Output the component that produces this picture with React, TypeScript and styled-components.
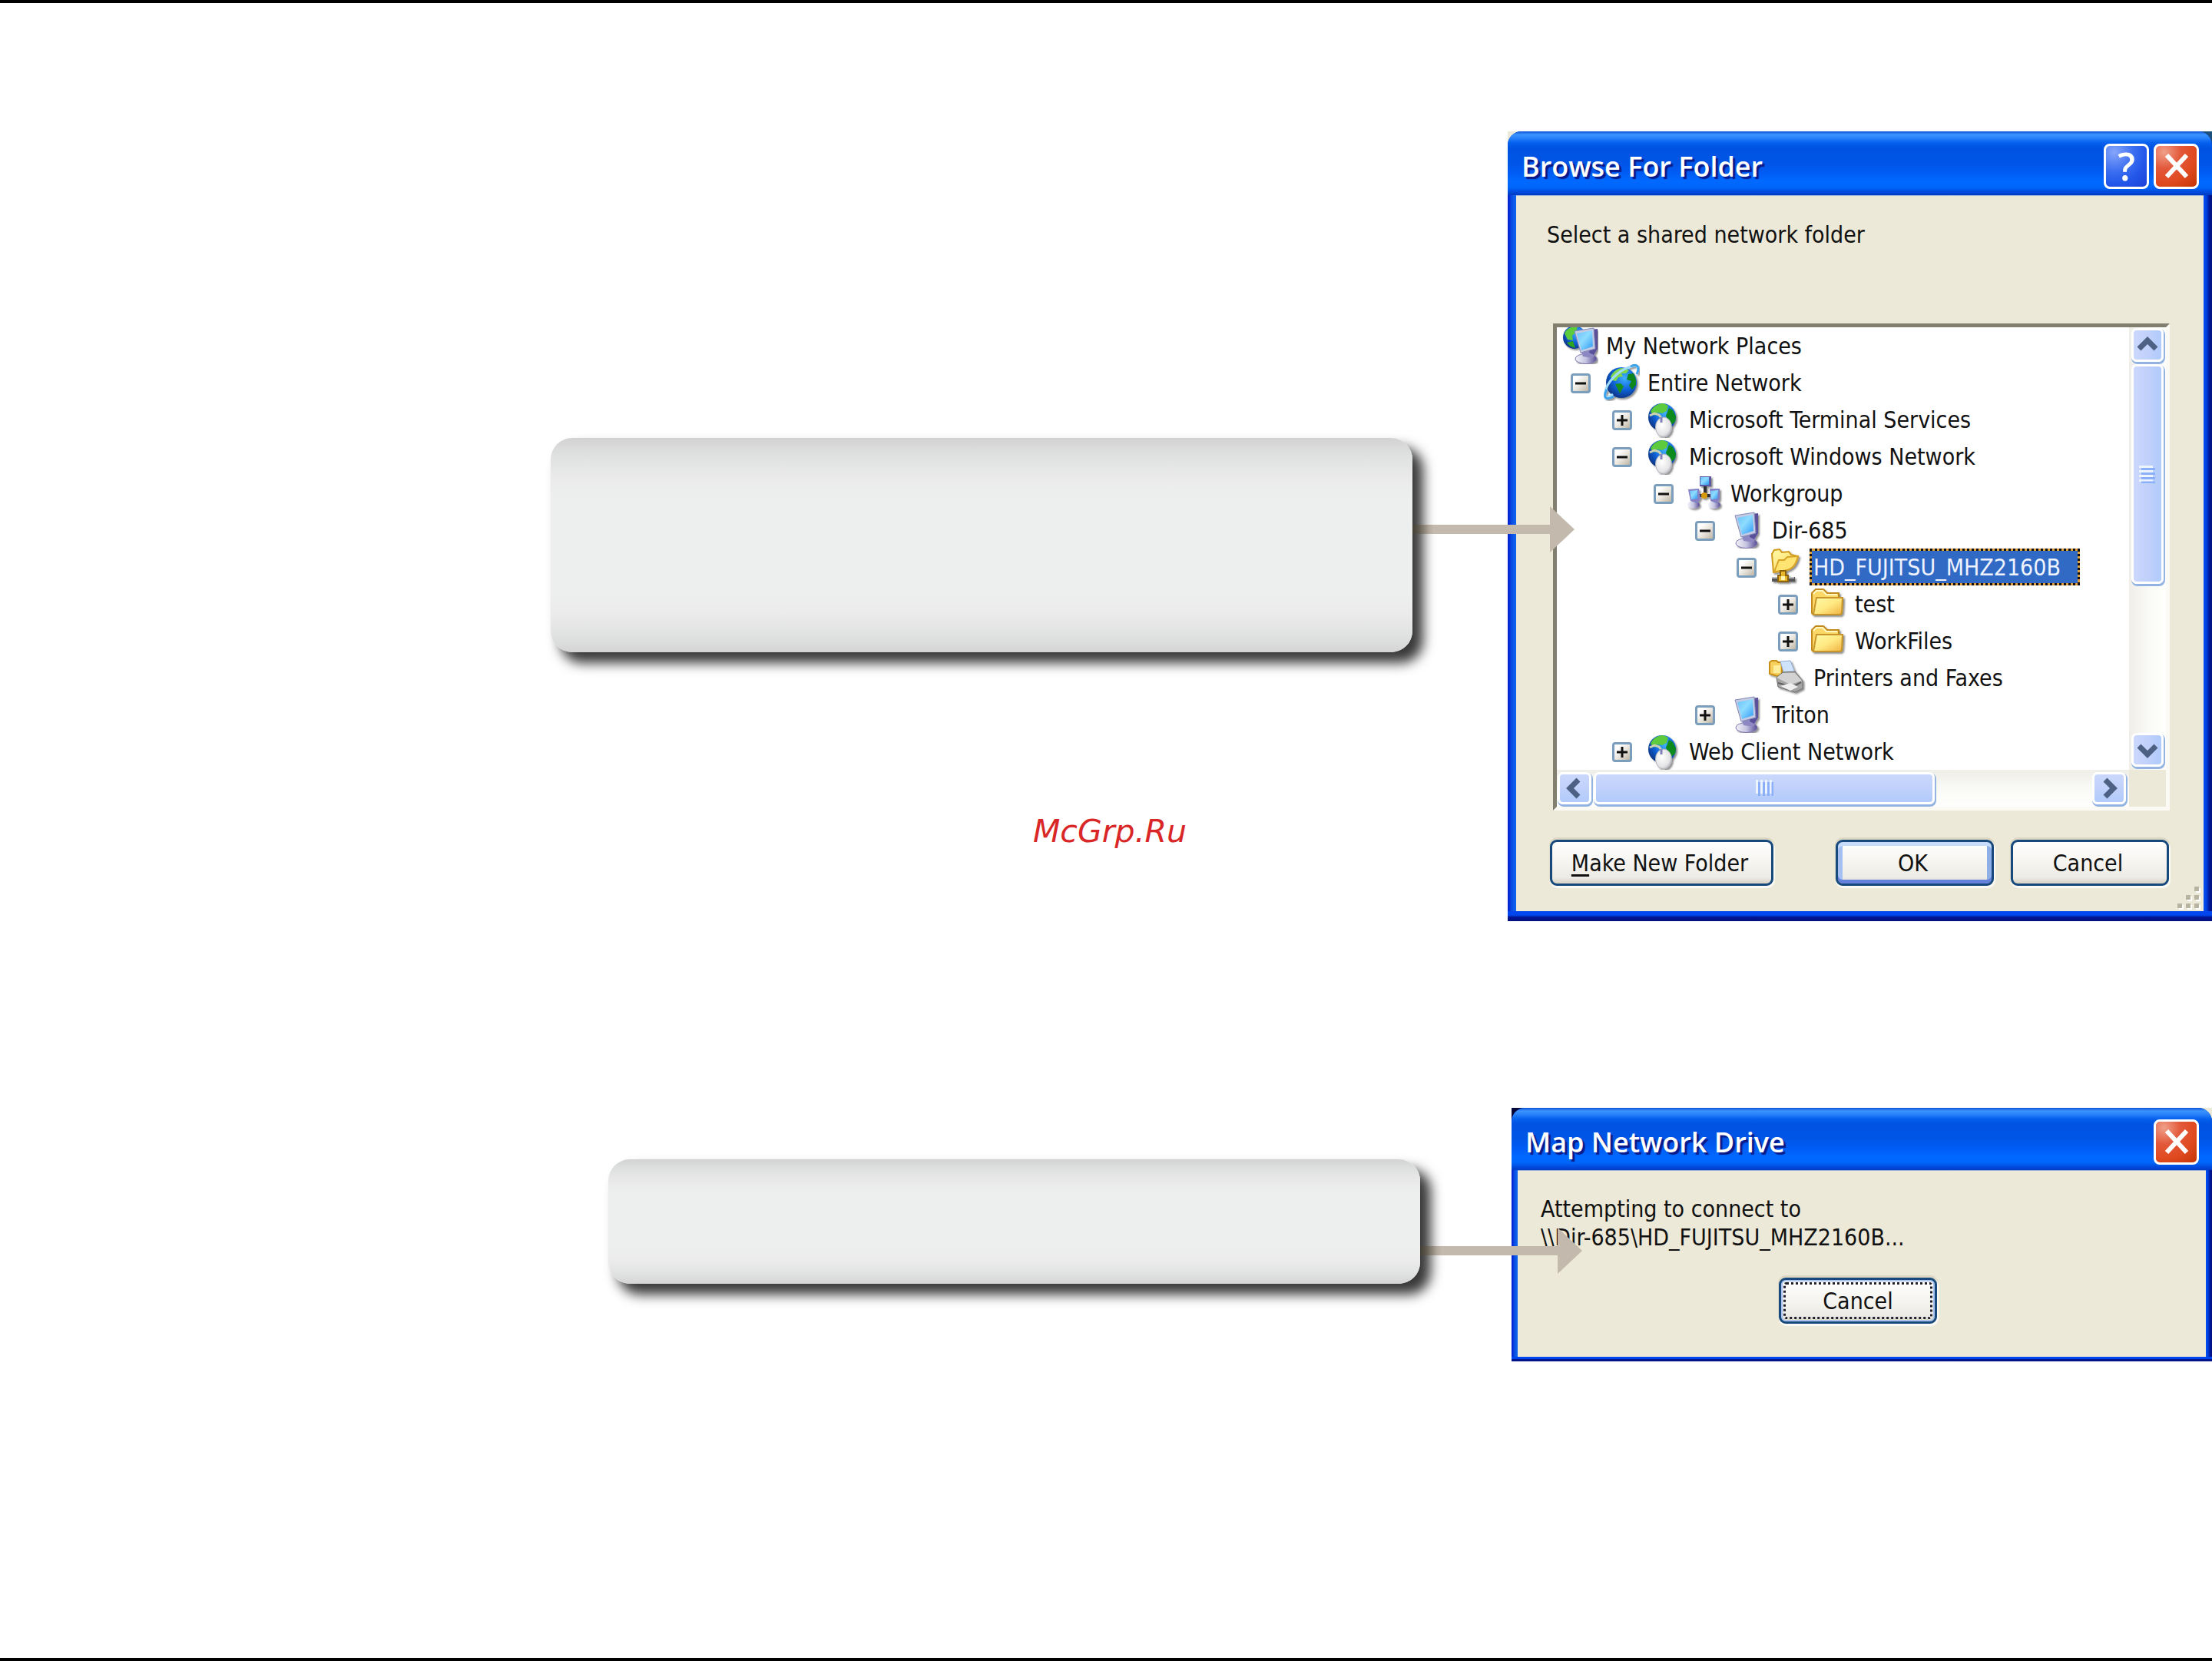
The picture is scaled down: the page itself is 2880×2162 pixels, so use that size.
import React from "react";
import styled, { createGlobalStyle } from "styled-components";

const ui = `"DejaVu Sans Condensed", "DejaVu Sans", "Open Sans", sans-serif`;

const GlobalStyle = createGlobalStyle`
  *, *::before, *::after { box-sizing: border-box; }
  body { margin: 0; background: #fff; color: #111; font: 30px/36px ${ui}; }
  button { font: inherit; color: inherit; margin: 0; padding: 0; cursor: pointer; }
  ul { list-style: none; margin: 0; padding: 0; }
  p, h2 { margin: 0; }
`;

const Page = styled.main`
  position: relative;
  display: flex;
  flex-direction: column;
  gap: 243px;
  min-height: 100vh;
  padding: 167px 0 240px;
  border: solid #000;
  border-width: 4px 0;
  overflow: hidden;
`;

const Step = styled.section<{ $columns: string }>`
  display: grid;
  grid-template-columns: ${(p) => p.$columns};
  align-items: start;
`;

const Callout = styled.div<{ $top: number; $height: number }>`
  grid-column: 2;
  margin-top: ${(p) => p.$top}px;
  height: ${(p) => p.$height}px;
  border-radius: 28px;
  background: linear-gradient(#d2d2d2, #dfe1e0 8%, #ebebeb 20%, #edefee 28%, #edefee 72%, #ebebeb 82%, #dfe1e0 93%, #d4d4d4);
  box-shadow: 13px 13px 16px 1px rgba(0, 0, 0, 0.78);
`;

const Connector = styled.div<{ $top: number; $overlap: number }>`
  display: flex;
  align-items: center;
  z-index: 1;
  margin: ${(p) => p.$top}px -${(p) => p.$overlap}px 0 0;

  &::before {
    content: "";
    flex: 1;
    height: 12px;
    background: linear-gradient(to right, #423e35, #5f594e 8px, #b3aa9d 22px, #c3baad 28px);
  }
  &::after {
    content: "";
    border-left: 32px solid #c3baad;
    border-top: 30px solid transparent;
    border-bottom: 30px solid transparent;
  }
`;

const Watermark = styled.a`
  position: absolute;
  left: 50%;
  top: 1054px;
  margin-left: 5px;
  transform: translateX(-50%);
  color: #d92626;
  font: italic 41px/48px "DejaVu Sans", sans-serif;
  text-decoration: none;
`;

const Backdrop = styled.div<{ $left: string; $right: string }>`
  background: linear-gradient(to right, ${(p) => p.$left} 50%, ${(p) => p.$right} 50%) top / 100% 40px no-repeat;
`;

const Window = styled.section<{ $side: number; $base: number }>`
  padding: 0 ${(p) => p.$side}px ${(p) => p.$base}px;
  border-radius: 18px 18px 0 0;
  overflow: hidden;
  background:
    linear-gradient(#0046ee 40%, #001590 60%, #000f80) bottom / 100% ${(p) => p.$base}px no-repeat,
    linear-gradient(to right, #0019cf, #0a50e4 50%, #0f66ee) left / ${(p) => p.$side}px 100% no-repeat,
    linear-gradient(to right, #0050f4, #0040e0 35%, #001aa0 65%, #00107c) right / ${(p) => p.$side}px 100% no-repeat,
    #0050e6;
`;

const TitleBar = styled.header<{ $side: number; $height: number }>`
  display: flex;
  align-items: center;
  gap: 6px;
  height: ${(p) => p.$height}px;
  margin: 0 -${(p) => p.$side}px;
  padding: 7px 17px 0 18px;
  background: linear-gradient(#0c52d4, #3c94ff 5%, #2a84fb 10%, #0560ee 18%, #0053e2 26%, #0055e6 50%, #005cf5 65%, #0069ff 78%, #0066fb 88%, #0047d8 96%, #003bc0);
`;

const Title = styled.h2`
  flex: 1;
  margin-top: 2px;
  color: #fff;
  font: 600 36px/48px "Open Sans", "Noto Sans", sans-serif;
  text-shadow: 3px 3px 1px #0a1a88;
  white-space: nowrap;
`;

const CaptionButton = styled.button<{ $danger?: boolean }>`
  display: grid;
  place-items: center;
  width: 59px;
  height: 59px;
  border: 3px solid #fff;
  border-radius: 8px;
  color: #fff;
  font: 600 50px/50px "Open Sans", sans-serif;
  background: ${(p) =>
    p.$danger
      ? "radial-gradient(circle at 20% 15%, #f0a08a, #e2583a 35%, #e04a20 65%, #c23404)"
      : "radial-gradient(circle at 20% 15%, #86a6fb, #3d6ff0 40%, #2458ea 65%, #1c40d8)"};
`;

const Body = styled.div`
  position: relative;
  padding: 33px 44px 33px 44px;
  background: #ece9d8;
  border-top: 1px solid #9cb4dc;
`;

const Prompt = styled.p`
  margin: 0 0 97px -4px;
`;

const TreeFrame = styled.div`
  display: grid;
  grid-template-columns: 1fr 48px;
  grid-template-rows: auto 48px;
  margin: 0 0 38px 4px;
  border: 5px solid;
  border-color: #827e70 #fbfaf4 #fbfaf4 #827e70;
  background: #ece9d8;
`;

const Tree = styled.ul`
  background: #fff;
`;

const TreeItem = styled.li<{ $level: number }>`
  display: flex;
  align-items: center;
  height: 48px;
  padding-left: ${(p) => (p.$level ? (p.$level - 1) * 54 : 6)}px;
  white-space: nowrap;

  & > svg { flex: none; width: 48px; height: 48px; margin-right: 5px; }
`;

const ToggleSlot = styled.span`
  flex: none;
  width: 60px;
  padding: 2px 0 0 18px;
`;

const Toggle = styled.button`
  display: grid;
  place-items: center;
  width: 26px;
  height: 26px;
  border: 3px solid #7b9ebd;
  border-radius: 4px;
  background: linear-gradient(135deg, #fff 20%, #e9e5dd 55%, #bdb5a5);
`;

const NodeLabel = styled.span<{ $selected?: boolean }>`
  padding: 4px 22px 2px 2px;
  border: 3px dotted transparent;
  ${(p) =>
    p.$selected &&
    `color: #eef3ff; border-color: #111; background: linear-gradient(#316ac5, #316ac5) padding-box, #e0a040 border-box;`}
`;

const ScrollTrack = styled.div<{ $vertical?: boolean }>`
  display: flex;
  flex-direction: ${(p) => (p.$vertical ? "column" : "row")};
  gap: 3px;
  padding: ${(p) => (p.$vertical ? "1px 3px 4px 3px" : "3px 4px 3px 1px")};
  background: linear-gradient(${(p) => (p.$vertical ? "to right" : "to bottom")}, #efeee8, #fbfbf8 60%, #fefefc);
`;

const ScrollPart = styled.button<{ $vertical?: boolean; $length?: string; $push?: boolean }>`
  display: grid;
  place-items: center;
  flex: 0 0 ${(p) => p.$length ?? "44px"};
  ${(p) => (p.$vertical ? "width: 42px;" : "height: 42px;")}
  ${(p) => p.$push && (p.$vertical ? "margin-top: auto;" : "margin-left: auto;")}
  border: 3px solid #fff;
  border-radius: 7px;
  box-shadow: 1px 2px 0 1px #93b4e2;
  background: linear-gradient(${(p) => (p.$vertical ? "to right" : "to bottom")}, #cbd8fc, #bfd0fb 55%, #b0cbfb);
`;

const Actions = styled.footer`
  display: flex;
  align-items: center;
  gap: 22px;
  margin-right: 1px;
`;

const PushButton = styled.button<{ $width: number; $kind?: "default" | "focused"; $push?: boolean }>`
  display: flex;
  align-items: center;
  justify-content: center;
  width: ${(p) => p.$width}px;
  height: 60px;
  ${(p) => p.$push && "margin-left: auto;"}
  padding: 2px 5px 0 0;
  border: 3px solid #17497c;
  border-radius: 9px;
  background: linear-gradient(#fff, #f5f4f0 50%, #ecebe5 86%, #d8d1c4);
  box-shadow: 1px 2px 1px 1px #fbfaf5, 0 -2px 1px 1px #dbd7c4
    ${(p) => p.$kind === "default" && ", inset 0 5px 0 #c6dcfa, inset 0 -5px 0 #6482dc, inset 6px 0 0 #a4c0f2, inset -6px 0 0 #8eaee8"}
    ${(p) => p.$kind === "focused" && ", inset 0 0 0 2px #a9c3ec"};

  u { text-decoration-thickness: 3px; text-underline-offset: 4px; }
`;

const FocusRing = styled.span`
  flex: 1;
  align-self: stretch;
  margin: 1px -2px 3px 3px;
  border: 3px dotted #20202c;
  border-radius: 4px;
  line-height: 44px;
`;

const ResizeGrip = styled.svg`
  position: absolute;
  right: 4px;
  bottom: 2px;
`;

const Message = styled.div`
  display: flex;
  flex-direction: column;
  align-items: flex-start;
  padding: 31px 40px 43px 30px;
  border-top: 1px solid #9cb4dc;
  background: #ece9d8;
  line-height: 37px;

  ${PushButton} { align-self: center; margin-top: 34px; }
`;

const CloseGlyph = () => (
  <svg width="34" height="34" viewBox="0 0 34 34" aria-hidden="true">
    <path d="M4 3 30 31M30 3 4 31" stroke="#fff" strokeWidth="6" />
  </svg>
);

const Chevron = ({ turn }: { turn: number }) => (
  <svg width="28" height="28" viewBox="0 0 28 28" aria-hidden="true">
    <path d="M3 19 14 8 25 19" fill="none" stroke="#4d6185" strokeWidth="7" transform={`rotate(${turn} 14 14)`} />
  </svg>
);

const Grip = ({ vertical }: { vertical?: boolean }) => (
  <svg width="24" height="24" viewBox="0 0 24 24" aria-hidden="true">
    <g transform={vertical ? undefined : "matrix(0 1 1 0 0 0)"} strokeWidth="3">
      <path d="M1 2.5H19M1 8.500H19M1 14.500H19M1 20.500H19" stroke="#eef4fe" />
      <path d="M4 5.500H22M4 11.500H22M4 17.500H22M4 23H22" stroke="#8cb0f8" />
    </g>
  </svg>
);

const HiddenSvg = styled.svg`
  position: absolute;
`;

const Defs = () => (
  <HiddenSvg width="0" height="0" aria-hidden="true">
    <defs>
      <radialGradient id="sea" cx="0.6" cy="0.35" r="0.7">
        <stop offset="0" stopColor="#3fb2ff" />
        <stop offset="0.55" stopColor="#0f62d8" />
        <stop offset="1" stopColor="#08307e" />
      </radialGradient>
      <linearGradient id="screen" x1="0" y1="0" x2="1" y2="1">
        <stop offset="0" stopColor="#6cc0fa" />
        <stop offset="0.45" stopColor="#8edcff" />
        <stop offset="1" stopColor="#2c98f4" />
      </linearGradient>
      <linearGradient id="case" x1="0" y1="0" x2="1" y2="0">
        <stop offset="0" stopColor="#f4f4fb" />
        <stop offset="0.5" stopColor="#c4c3e0" />
        <stop offset="1" stopColor="#544a94" />
      </linearGradient>
      <linearGradient id="gold" x1="0" y1="0" x2="1" y2="1">
        <stop offset="0" stopColor="#fffaa8" />
        <stop offset="0.5" stopColor="#ffe983" />
        <stop offset="1" stopColor="#f0b040" />
      </linearGradient>
      <radialGradient id="mouse" cx="0.4" cy="0.4" r="0.7">
        <stop offset="0" stopColor="#fff" />
        <stop offset="0.7" stopColor="#e4e4e6" />
        <stop offset="1" stopColor="#a4a4a8" />
      </radialGradient>
      <filter id="soft" x="-20%" y="-20%" width="150%" height="150%">
        <feDropShadow dx="2" dy="2" stdDeviation="1.200" floodOpacity="0.45" />
      </filter>
    </defs>
  </HiddenSvg>
);

const Monitor = () => (
  <>
    <ellipse cx="25" cy="41" rx="14" ry="6.500" fill="url(#case)" stroke="#7c76ac" />
    <path d="M19 31 30 28 37 33 34 40 21 38z" fill="#8e88c2" />
    <path d="M33 3 40 2 40 28 35 36 29 33z" fill="#5a509a" />
    <path d="M10 5 35 1 37 28 18 33z" fill="#c6cbe4" stroke="#8389b8" />
    <path d="M13 8 33 4 34 25 19 30z" fill="url(#screen)" />
  </>
);

const Land = () => (
  <>
    <path d="M6 14C9 7 16 3 23 3l6 2-3 4-6 1 1 4-5 2-3 4-5-1z" fill="#4cc436" />
    <path d="M29 8 35 9 40 16 42 25 37 32 33 29 34 23 29 21 27 15z" fill="#118a1c" />
    <path d="M12 22 20 23 24 29 20 35 19 40 15 34z" fill="#2fa51e" />
  </>
);

const icons: Record<string, React.ReactNode> = {
  places: (
    <>
      <circle cx="17" cy="13" r="15" fill="url(#sea)" />
      <path d="M4 8C7 1 13-1 21-1L19 6 14 11 15 17 8 16z" fill="#5ccc3c" />
      <path d="M7 20 15 18 18 27 12 25z" fill="#2fa51e" />
      <g transform="translate(7 0)"><Monitor /></g>
    </>
  ),
  globe: (
    <>
      <circle cx="24" cy="24" r="20" fill="url(#sea)" />
      <path d="M10 16C14 9 19 5 26 5L34 8 30 12 24 12 26 16 20 17 17 22 12 21z" fill="#7fd84c" />
      <path d="M33 13 40 12 43 20 43 27 38 33 34 28 37 22 31 20z" fill="#0f861a" />
      <path d="M16 26 23 25 27 29 22 38 19 32z" fill="#188f1c" />
      <path d="M34 4C42 0 47 2 45 10M13 39C5 46 1 45 3 36 5 24 19 9 34 4" fill="none" stroke="#9fdcfc" strokeWidth="3" />
      <path d="M36 3C44-1 49 3 44 13M5 33C0 43 3 48 14 42" fill="none" stroke="#3ea2ea" strokeWidth="3" />
    </>
  ),
  provider: (
    <g transform="translate(1 1)">
      <circle cx="22" cy="20" r="18" fill="url(#sea)" />
      <path d="M7 13C10 6 16 2 24 2L30 5 28 12 22 15 16 14 12 18z" fill="#5ccb3c" />
      <path d="M31 8 36 11 40 19 39 26 34 30 29 23 27 18z" fill="#118a1c" />
      <path d="M6 18 12 15 18 17 23 24" fill="none" stroke="#c9d0b4" strokeWidth="3" />
      <ellipse cx="24" cy="33" rx="10.500" ry="13" fill="url(#mouse)" stroke="#b0b4bc" />
      <path d="M21 20V27" stroke="#8080b8" strokeWidth="3" />
    </g>
  ),
  workgroup: (
    <>
      <path d="M25 14V27M17 27H35" stroke="#2e2e34" strokeWidth="4" />
      <rect x="18" y="2" width="15" height="13" fill="#5c58a4" />
      <rect x="19" y="3" width="11" height="10" fill="url(#screen)" />
      <ellipse cx="10" cy="39" rx="8" ry="5" fill="url(#case)" />
      <ellipse cx="37" cy="39" rx="8" ry="5" fill="url(#case)" />
      <path d="M3 19 17 18 19 31 15 37 6 34z" fill="#8480c4" />
      <path d="M31 18 44 18 44 32 40 37 32 34z" fill="#8480c4" />
      <path d="M5 21 15 20 15 31 7 32z" fill="url(#screen)" />
      <path d="M32 21 42 20 41 31 33 32z" fill="url(#screen)" />
      <circle cx="24" cy="27" r="4" fill="#d89a10" />
    </>
  ),
  computer: <Monitor />,
  share: (
    <>
      <path d="M4 40H34" stroke="#555" strokeWidth="6" />
      <path d="M4 38H13M25 38H33" stroke="#b9bcc0" strokeWidth="2" />
      <path d="M4 7 7 2 14 1 17 5 26 4 29 8 38 10C36 22 30 28 18 29L6 31z" fill="url(#gold)" stroke="#cf9a1e" strokeWidth="2" />
      <path d="M7 30 13 15 20 15 24 11 38 10C35 22 30 28 18 29z" fill="#ffe472" stroke="#d8a428" strokeWidth="2" />
      <path d="M15 29H22V35H25V43H12V35H15z" fill="#e8b62c" stroke="#8d6408" strokeWidth="2" />
      <rect x="16" y="36" width="5" height="5" fill="#fff6b8" />
    </>
  ),
  folder: (
    <>
      <path d="M2 36V10L7 5H17L22 10H37V17H42L41 36 39 38H4z" fill="#fbd768" stroke="#c28a1a" strokeWidth="2" />
      <path d="M4 11 8 7H16L21 12H35" fill="none" stroke="#fff8c0" strokeWidth="2" />
      <path d="M8 16H42L41 36 39 38H4z" fill="url(#gold)" stroke="#c8962a" strokeWidth="2" />
    </>
  ),
  printer: (
    <>
      <path d="M1 4 4 2H10L12 4H17V20L11 22 1 19z" fill="#f7cf5c" stroke="#c88f18" strokeWidth="2" />
      <path d="M6 8H15V18H6z" fill="#ffed9c" />
      <path d="M15 3 28 2 34 17 20 20z" fill="#cfe4fb" stroke="#92acd0" />
      <path d="M10 24 18 17 34 16 44 28 44 38 34 43 12 36z" fill="#a4a4a4" stroke="#6c6c6c" />
      <path d="M10 24 18 18 34 18 43 28 28 33z" fill="#d2d2d2" />
      <path d="M12 31 31 36 42 30" fill="none" stroke="#606060" strokeWidth="2" />
      <path d="M15 35 28 31 38 36 28 41z" fill="#efefef" />
    </>
  ),
};

const NodeIcon = ({ name }: { name: string }) => (
  <svg viewBox="0 0 48 48" aria-hidden="true"><g filter="url(#soft)">{icons[name]}</g></svg>
);

type Node = { label: string; level: number; icon: string; open?: boolean; selected?: boolean };

const nodes: Node[] = [
  { label: "My Network Places", level: 0, icon: "places" },
  { label: "Entire Network", level: 1, icon: "globe", open: true },
  { label: "Microsoft Terminal Services", level: 2, icon: "provider", open: false },
  { label: "Microsoft Windows Network", level: 2, icon: "provider", open: true },
  { label: "Workgroup", level: 3, icon: "workgroup", open: true },
  { label: "Dir-685", level: 4, icon: "computer", open: true },
  { label: "HD_FUJITSU_MHZ2160B", level: 5, icon: "share", open: true, selected: true },
  { label: "test", level: 6, icon: "folder", open: false },
  { label: "WorkFiles", level: 6, icon: "folder", open: false },
  { label: "Printers and Faxes", level: 5, icon: "printer" },
  { label: "Triton", level: 4, icon: "computer", open: false },
  { label: "Web Client Network", level: 2, icon: "provider", open: false },
];

const FolderTree = () => (
  <Tree role="tree" aria-label="Shared network folders">
    {nodes.map((n) => (
      <TreeItem key={n.label} role="treeitem" $level={n.level} aria-level={n.level + 1} aria-expanded={n.open} aria-selected={!!n.selected}>
        {n.level > 0 && (
          <ToggleSlot>
            {n.open !== undefined && (
              <Toggle type="button" aria-label={n.open ? "Collapse" : "Expand"}>
                <svg width="16" height="16" viewBox="0 0 16 16">
                  <path d={n.open ? "M1 8H15" : "M1 8H15M8 1V15"} stroke="#111" strokeWidth="3" />
                </svg>
              </Toggle>
            )}
          </ToggleSlot>
        )}
        <NodeIcon name={n.icon} />
        <NodeLabel $selected={n.selected}>{n.label}</NodeLabel>
      </TreeItem>
    ))}
  </Tree>
);

const BrowseDialog = () => (
  <Backdrop $left="#ece9d8" $right="#1c4f7c">
    <Window $side={11} $base={13} role="dialog" aria-labelledby="browse-title">
      <TitleBar $side={11} $height={83}>
        <Title id="browse-title">Browse For Folder</Title>
        <CaptionButton type="button" aria-label="Help">?</CaptionButton>
        <CaptionButton type="button" aria-label="Close" $danger><CloseGlyph /></CaptionButton>
      </TitleBar>
      <Body>
        <Prompt>Select a shared network folder</Prompt>
        <TreeFrame>
          <FolderTree />
          <ScrollTrack $vertical>
            <ScrollPart type="button" $vertical aria-label="Scroll up"><Chevron turn={0} /></ScrollPart>
            <ScrollPart type="button" $vertical $length="50%" aria-label="Vertical position"><Grip vertical /></ScrollPart>
            <ScrollPart type="button" $vertical $push aria-label="Scroll down"><Chevron turn={180} /></ScrollPart>
          </ScrollTrack>
          <ScrollTrack>
            <ScrollPart type="button" aria-label="Scroll left"><Chevron turn={-90} /></ScrollPart>
            <ScrollPart type="button" $length="60%" aria-label="Horizontal position"><Grip /></ScrollPart>
            <ScrollPart type="button" $push aria-label="Scroll right"><Chevron turn={90} /></ScrollPart>
          </ScrollTrack>
        </TreeFrame>
        <Actions>
          <PushButton type="button" $width={291}><span><u>M</u>ake New Folder</span></PushButton>
          <PushButton type="button" $width={206} $kind="default" $push>OK</PushButton>
          <PushButton type="button" $width={206}>Cancel</PushButton>
        </Actions>
        <ResizeGrip width="32" height="32" viewBox="0 0 32 32" aria-hidden="true">
          <path d="M26 4h6v6h-6zM15 15h6v6h-6zM26 15h6v6h-6zM4 26h6v6h-6zM15 26h6v6h-6zM26 26h6v6h-6z" fill="#fff" />
          <path d="M24 2h6v6h-6zM13 13h6v6h-6zM24 13h6v6h-6zM2 24h6v6h-6zM13 24h6v6h-6zM24 24h6v6h-6z" fill="#b8b4a2" />
        </ResizeGrip>
      </Body>
    </Window>
  </Backdrop>
);

const ConnectDialog = () => (
  <Backdrop $left="#06083c" $right="#ece9d8">
    <Window $side={8} $base={6} role="dialog" aria-labelledby="connect-title">
      <TitleBar $side={8} $height={81}>
        <Title id="connect-title">Map Network Drive</Title>
        <CaptionButton type="button" aria-label="Close" $danger><CloseGlyph /></CaptionButton>
      </TitleBar>
      <Message>
        <p>Attempting to connect to<br />{"\\\\Dir-685\\HD_FUJITSU_MHZ2160B..."}</p>
        <PushButton type="button" $width={206} $kind="focused"><FocusRing>Cancel</FocusRing></PushButton>
      </Message>
    </Window>
  </Backdrop>
);

export default function App() {
  return (
    <Page>
      <GlobalStyle />
      <Defs />
      <Step $columns="717fr 1122fr 124fr 917fr">
        <Callout $top={399} $height={279} />
        <Connector $top={488} $overlap={87} />
        <BrowseDialog />
      </Step>
      <Step $columns="792fr 1057fr 119fr 912fr">
        <Callout $top={67} $height={162} />
        <Connector $top={156} $overlap={92} />
        <ConnectDialog />
      </Step>
      <Watermark href="#">McGrp.Ru</Watermark>
    </Page>
  );
}
